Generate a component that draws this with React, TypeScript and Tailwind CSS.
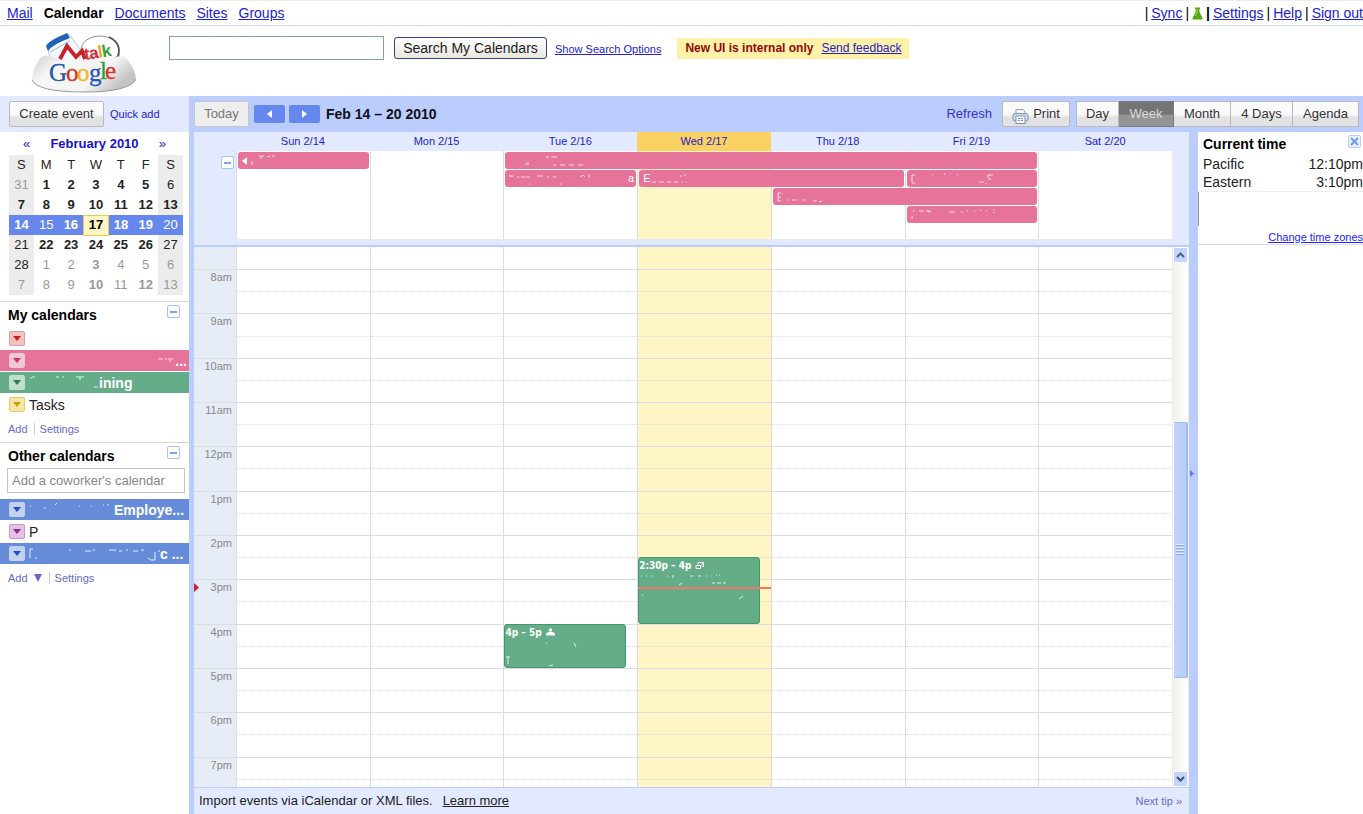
import React from "react";
import clsx from "clsx";

const DAYS = ["Sun 2/14", "Mon 2/15", "Tue 2/16", "Wed 2/17", "Thu 2/18", "Fri 2/19", "Sat 2/20"];
const HOURS = ["8am", "9am", "10am", "11am", "12pm", "1pm", "2pm", "3pm", "4pm", "5pm", "6pm", "7pm"];
const TODAY = 3;
const FIRST_HOUR = 8;

const topOf = (hour: number) => `${((hour - FIRST_HOUR) / HOURS.length) * 100}%`;
const heightOf = (hours: number) => `${(hours / HOURS.length) * 100}%`;

function Specks({ d, className }: { d: string; className?: string }) {
  return (
    <svg className={clsx("shrink-0", className)} width="100" height="16" viewBox="0 0 100 16" aria-hidden="true">
      <path d={d} fill="none" stroke="#fff" strokeOpacity="0.75" strokeWidth="1" />
    </svg>
  );
}

function Logo() {
  return (
    <svg width="110" height="64" viewBox="0 0 110 64" role="img" aria-label="Google talk bowl">
      <defs>
        <linearGradient id="bowl" x1="0" x2="1" y1="0" y2="0.4">
          <stop offset="0" stopColor="#cfcfcf" />
          <stop offset="0.3" stopColor="#f6f6f6" />
          <stop offset="0.75" stopColor="#f4f4f4" />
          <stop offset="1" stopColor="#c4c4c4" />
        </linearGradient>
      </defs>
      <ellipse cx="71" cy="18" rx="19" ry="14" fill="#fff" stroke="#8a8a8a" strokeWidth="1" />
      <path d="M80 5q13 6 9 20" fill="none" stroke="#555" strokeWidth="1.800" />
      <path d="M18 14 40 2l11 15v12H22z" fill="#f4f8fc" stroke="#a9bbcb" strokeWidth="0.800" />
      <path d="M17 14Q19 9 38 1l3 5Q24 12 19 19z" fill="#2463b4" />
      <path d="M21 20 41 9" fill="none" stroke="#9db9dc" strokeWidth="1" />
      <path d="M12 25Q16 22 24 25 56 29 88 25 94 22 97 26 107 38 107 48 100 60 56 60 8 60 3 48 3 37 12 25z" fill="url(#bowl)" />
      <path d="M3 48Q8 60 56 60 100 60 107 47" fill="none" stroke="#979b9e" strokeWidth="1" />
      <path d="M31 27 38 14l9 11 6-6 3 8" fill="none" stroke="#c5222a" strokeWidth="3.800" />
      <g fontFamily="Liberation Sans, sans-serif" fontSize="17" fontWeight="bold" transform="rotate(-9 56 28)">
        <text x="56" y="28" fill="#d6342f">t</text>
        <text x="61" y="28" fill="#d6283f">a</text>
        <text x="70" y="28" fill="#f0a51c">l</text>
        <text x="74" y="28" fill="#3a9e2f">k</text>
      </g>
      <g fontFamily="Liberation Serif, serif" fontSize="25" strokeWidth="0.300">
        <text x="20" y="49" fill="#2657a8" stroke="#2657a8">G</text>
        <text x="37" y="49" fill="#d8332b" stroke="#d8332b">o</text>
        <text x="48" y="49" fill="#efb81b" stroke="#efb81b">o</text>
        <text x="60" y="49" fill="#2657c0" stroke="#2657c0">g</text>
        <text x="71" y="47" fill="#2f9e3b" stroke="#2f9e3b">l</text>
        <text x="76" y="47" fill="#d8332b" stroke="#d8332b">e</text>
      </g>
    </svg>
  );
}

function Flask() {
  return (
    <svg width="11" height="13" viewBox="0 0 11 13" aria-hidden="true">
      <path d="M3 0.500h5v1.500H7.500v3l3 6q0.500 1.500-1 1.500h-8q-1.500 0-1-1.500l3-6V2H3z" fill="#55a80f" />
      <path d="M5 2v3.500L3 9" fill="none" stroke="#a6dc6c" strokeWidth="1" />
    </svg>
  );
}

function PrintIcon() {
  return (
    <svg width="17" height="16" viewBox="0 0 17 16" fill="none" aria-hidden="true">
      <path d="M4 6V1.500h7L13 4v2" fill="#fff" stroke="#8f9fb2" />
      <rect x="1" y="5.500" width="15" height="7.500" rx="2" fill="#d5dfe9" stroke="#7d93ab" />
      <rect x="4" y="8" width="9" height="7.500" fill="#fff" stroke="#7d93ab" />
      <path d="M6 10.500h5M6 12.500h5" stroke="#5e95da" strokeDasharray="2 1" />
    </svg>
  );
}

function Minus({ label }: { label: string }) {
  return (
    <button aria-label={label} className="flex size-[13px] shrink-0 items-center justify-center rounded-[2px] border border-[#a9c0fa] bg-white">
      <span className="h-[2px] w-[7px] bg-[#7ea2ec]" />
    </button>
  );
}

const BTN = "border border-[#b9b9b9] bg-linear-to-b from-[#fafafa] from-50% to-[#e2e2e2] to-65% text-[#333]";

function TopBar() {
  return (
    <nav className="flex h-[26px] shrink-0 items-center justify-between border-t border-b border-t-[#eee] border-b-[#c9dbef] pl-[7px] text-sm whitespace-nowrap">
      <div className="flex gap-[11px] text-[#22c]">
        <a href="#mail" className="underline">Mail</a>
        <b className="text-black">Calendar</b>
        <a href="#documents" className="underline">Documents</a>
        <a href="#sites" className="underline">Sites</a>
        <a href="#groups" className="underline">Groups</a>
      </div>
      <div className="flex items-center gap-[3px] text-[#22c]">
        <span className="text-black">|</span>
        <a href="#sync" className="underline">Sync</a>
        <span className="text-black">|</span>
        <Flask />
        <b className="text-black">|</b>
        <a href="#settings" className="underline">Settings</a>
        <span className="text-black">|</span>
        <a href="#help" className="underline">Help</a>
        <span className="text-black">|</span>
        <a href="#signout" className="underline">Sign out</a>
      </div>
    </nav>
  );
}

function SearchHeader() {
  return (
    <header className="flex h-[70px] shrink-0 items-start whitespace-nowrap">
      <div className="w-[169px] shrink-0 pt-[6px] pl-[29px]">
        <Logo />
      </div>
      <form className="flex items-center pt-[10px]" onSubmit={(e) => e.preventDefault()}>
        <input aria-label="Search calendars" className="h-6 w-[215px] border border-[#7f9db9] bg-white px-1 text-sm outline-none" />
        <button className="ml-[10px] h-[22px] w-[153px] rounded-[3px] border border-[#35427d] bg-linear-to-b from-white to-[#e8e7e0] text-sm text-[#222]">
          Search My Calendars
        </button>
        <a href="#options" className="ml-2 pt-[3px] text-[11px] text-[#22c] underline">Show Search Options</a>
        <div className="ml-4 flex h-[21px] items-center gap-2 bg-[#fff1a8] px-2 text-xs">
          <b className="text-[#8f0808]">New UI is internal only</b>
          <a href="#feedback" className="text-[#22c] underline">Send feedback</a>
        </div>
      </form>
    </header>
  );
}

/* A trailing "b" marks a day that has events, "o" a day outside the month. */
const WEEKS = [
  ["31o", "1b", "2b", "3b", "4b", "5b", "6"],
  ["7b", "8b", "9b", "10b", "11b", "12b", "13b"],
  ["14b", "15", "16b", "17b", "18b", "19b", "20"],
  ["21", "22b", "23b", "24b", "25b", "26b", "27"],
  ["28", "1o", "2o", "3bo", "4o", "5o", "6o"],
  ["7o", "8o", "9o", "10bo", "11o", "12bo", "13o"],
];

function MiniCalendar() {
  return (
    <section className="px-[6px] pb-[6px]">
      <div className="flex h-[23px] items-center justify-between px-[17px] text-[#22c]">
        <button aria-label="Previous month" className="text-[13px]">«</button>
        <b className="text-[13px] text-[#1a10c8]">February 2010</b>
        <button aria-label="Next month" className="text-[13px]">»</button>
      </div>
      <table className="ml-[3px] w-[174px] table-fixed border-collapse text-center text-[13px] leading-4 text-[#222]">
        <thead>
          <tr className="h-5">
            {["S", "M", "T", "W", "T", "F", "S"].map((d, i) => (
              <th key={i} className={clsx("p-0 font-normal", i % 6 === 0 && "bg-[#ececec]")}>{d}</th>
            ))}
          </tr>
        </thead>
        <tbody>
          {WEEKS.map((week, w) => (
            <tr key={w} className="h-5">
              {week.map((day, i) => (
                <td
                  key={i}
                  className={clsx(
                    "p-0",
                    day.includes("b") && "font-bold",
                    day.includes("o") && "text-[#999]",
                    w === 2 && i !== TODAY && "bg-[#6688ee] text-white",
                    w === 2 && i === TODAY && "border border-[#f3c74f] bg-[#fff5c5] text-black",
                    w !== 2 && i % 6 === 0 && "bg-[#ececec]",
                  )}
                >
                  {parseInt(day, 10)}
                </td>
              ))}
            </tr>
          ))}
        </tbody>
      </table>
    </section>
  );
}

function Chip({ className, label }: { className: string; label: string }) {
  return (
    <button aria-label={label} className={clsx("flex h-[15px] w-4 shrink-0 items-center justify-center rounded-[2px] border", className)}>
      <svg width="8" height="5" viewBox="0 0 8 5" aria-hidden="true">
        <path d="M0 0h8L4 5z" fill="currentColor" />
      </svg>
    </button>
  );
}

const ROW = "flex h-[21px] items-center gap-1 overflow-hidden pl-[9px] text-sm whitespace-nowrap";
const SECTION_HEAD = "flex items-start justify-between pr-[9px] pl-2";

function Sidebar() {
  return (
    <aside className="flex w-[189px] shrink-0 flex-col bg-white">
      <div className="flex h-9 shrink-0 items-center gap-[6px] bg-[#e3e9ff] pl-[9px]">
        <button className={clsx(BTN, "h-[26px] w-[95px] rounded-[2px] text-[13px]")}>Create event</button>
        <a href="#quick" className="text-[11px] text-[#22c]">Quick add</a>
      </div>
      <MiniCalendar />

      <section className="border-t border-[#d8d8d8]">
        <div className={clsx(SECTION_HEAD, "h-[26px] pt-[3px]")}>
          <h2 className="text-sm font-bold text-black">My calendars</h2>
          <Minus label="Collapse my calendars" />
        </div>
        <div className="flex flex-col gap-px">
          <div className={ROW}>
            <Chip label="Calendar options" className="border-[#e79a9a] bg-[#f1c3c3] text-[#c5221f]" />
          </div>
          <div className={clsx(ROW, "justify-between bg-[#e67399] pr-[2px] font-bold text-white")}>
            <Chip label="Calendar options" className="border-[#f3c3d2] bg-[#f5c7d6] text-[#cf3468]" />
            <span className="flex items-center">
              <Specks d="M83 6h5M90 6h2M93 6h5M95 7v2" />
              ...
            </span>
          </div>
          <div className={clsx(ROW, "bg-[#65ad89] font-bold text-white")}>
            <Chip label="Calendar options" className="border-[#c1dfcf] bg-[#c1dfcf] text-[#2f7d55]" />
            <span className="flex items-center">
              <svg width="70" height="16" viewBox="0 0 70 16" aria-hidden="true">
                <path d="M1 4l2-2h3M27 2h3M33 2h2M47 2h8M51 2v3M69 12h-4" fill="none" stroke="#fff" strokeOpacity="0.8" />
              </svg>
              ining
            </span>
          </div>
          <div className={clsx(ROW, "text-[#222]")}>
            <Chip label="Calendar options" className="border-[#e8cd6b] bg-[#f5e6a8] text-[#c9a100]" />
            Tasks
          </div>
        </div>
        <div className="flex h-[27px] items-center pl-2 text-[11px] leading-3 text-[#6a6ac8]">
          <a href="#add" className="mr-[5px] border-r border-[#ccc] pr-[6px]">Add</a>
          <a href="#calsettings">Settings</a>
        </div>
      </section>

      <section className="border-t border-[#d8d8d8]">
        <div className={clsx(SECTION_HEAD, "h-[25px] pt-[3px]")}>
          <h2 className="text-sm font-bold text-black">Other calendars</h2>
          <Minus label="Collapse other calendars" />
        </div>
        <input
          aria-label="Add a coworker's calendar"
          placeholder="Add a coworker's calendar"
          className="mb-[6px] ml-[7px] block h-[25px] w-[178px] border border-[#c4c4c4] px-1 text-[13px] outline-none placeholder:text-[#888]"
        />
        <div className="flex flex-col gap-px">
          <div className={clsx(ROW, "bg-[#668cd9] font-bold text-white")}>
            <Chip label="Calendar options" className="border-[#c2d1f0] bg-[#c2d1f0] text-[#1f4fc0]" />
            <span className="flex items-center">
              <svg width="85" height="16" viewBox="0 0 85 16" aria-hidden="true">
                <path d="M1 4h1M15 6h2M26 3l2-2M50 4h1M62 4h1M74 3h1M79 2v2" fill="none" stroke="#fff" strokeOpacity="0.8" />
              </svg>
              Employe...
            </span>
          </div>
          <div className={clsx(ROW, "text-[#222]")}>
            <Chip label="Calendar options" className="border-[#c994c9] bg-[#e2c3e2] text-[#8a2b93]" />
            P
          </div>
          <div className={clsx(ROW, "bg-[#668cd9] font-bold text-white")}>
            <Chip label="Calendar options" className="border-[#c2d1f0] bg-[#c2d1f0] text-[#1f4fc0]" />
            <span className="flex items-center">
              <svg width="131" height="16" viewBox="0 0 131 16" aria-hidden="true">
                <path d="M1 3v9M1 3h3M6 12h2M40 4h2M56 5h6M65 3v2M80 4h7M90 5h3M97 4h2M104 5h5M112 4h3M119 12l3 2h4V6M129 5h2" fill="none" stroke="#fff" strokeOpacity="0.85" />
              </svg>
              c ...
            </span>
          </div>
        </div>
        <div className="flex h-[27px] items-center pl-2 text-[11px] leading-3 text-[#6a6ac8]">
          <a href="#addother" className="mr-[5px] flex items-center gap-[6px] border-r border-[#ccc] pr-[7px]">
            Add
            <svg width="8" height="8" viewBox="0 0 8 8" aria-hidden="true">
              <path d="M0 0h8L4 8z" fill="currentColor" />
            </svg>
          </a>
          <a href="#othersettings">Settings</a>
        </div>
      </section>
    </aside>
  );
}

function Toolbar() {
  const views = [
    { name: "Day", w: "w-[43px]" },
    { name: "Week", w: "w-[55px]" },
    { name: "Month", w: "w-[57px]" },
    { name: "4 Days", w: "w-[62px]" },
    { name: "Agenda", w: "w-[66px]" },
  ];
  return (
    <div className="flex h-9 shrink-0 items-center pr-1 text-[13px] whitespace-nowrap">
      <button className="h-[26px] w-[55px] rounded-[2px] border border-[#c6c6c6] bg-[#eee] text-[#777]">Today</button>
      <button aria-label="Previous week" className="ml-[5px] flex h-[18px] w-[31px] items-center justify-center rounded-[2px] bg-[#6688ee]">
        <svg width="5" height="8" viewBox="0 0 5 8" aria-hidden="true"><path d="M5 0v8L0 4z" fill="#fff" /></svg>
      </button>
      <button aria-label="Next week" className="ml-1 flex h-[18px] w-[31px] items-center justify-center rounded-[2px] bg-[#6688ee]">
        <svg width="5" height="8" viewBox="0 0 5 8" aria-hidden="true"><path d="M0 0v8l5-4z" fill="#fff" /></svg>
      </button>
      <h1 className="ml-[6px] text-sm font-bold text-[#111]">Feb 14 – 20 2010</h1>
      <a href="#refresh" className="mr-[10px] ml-auto text-[#3333cc]">Refresh</a>
      <button className={clsx(BTN, "mr-[6px] flex h-[26px] w-[68px] items-center justify-center gap-1 rounded-[2px]")}>
        <span className="pt-1"><PrintIcon /></span>
        Print
      </button>
      <div className="flex">
        {views.map((v) => (
          <button
            key={v.name}
            className={clsx(
              "h-[26px] border-y border-r text-center",
              v.w,
              v.name === "Day" && "border-l",
              v.name === "Week"
                ? "border-[#7a7a7a] bg-linear-to-b from-[#747474] from-50% to-[#949494] to-55% text-[#ddd]"
                : "border-[#b9b9b9] bg-linear-to-b from-[#fafafa] from-50% to-[#e2e2e2] to-65% text-[#333]",
            )}
          >
            {v.name}
          </button>
        ))}
      </div>
    </div>
  );
}

const COLS = "grid grid-cols-[42px_repeat(7,minmax(0,1fr))_17px]";

const ALL_DAY = [
  { pos: "col-start-2 col-span-1 row-start-1", lead: "", tail: "", d: "M9 8v4M16 3h5M18 4v2M24 4l3-1M29 3h3", back: true },
  { pos: "col-start-4 col-span-4 row-start-1", lead: "", tail: "", d: "M18 11h4M39 4h3M44 4h6M46 12h3M53 12h5M62 12h5M71 12h5M21 9v2" },
  { pos: "col-start-4 col-span-1 row-start-2", lead: "", tail: "a", d: "M2 5h4M5 5v1M10 6h2M14 6h4M19 6h4M30 5h6M40 6h2M46 6h3M73 6l3-2 2 2M82 4v3M22 13h1M53 13h1" },
  { pos: "col-start-5 col-span-2 row-start-2", lead: "E", tail: "", d: "M2 11h4M9 11h5M17 11h4M24 11h4M32 11h1M36 11h1M31 4v2M35 3v2" },
  { pos: "col-start-7 col-span-1 row-start-2", lead: "", tail: "", d: "M3 4v8M3 4h3M3 12h3M23 4h1M35 3h2M41 3h1M48 4h1M70 11h5M79 4h5M79 4v3M79 8h3M77 12v1" },
  { pos: "col-start-6 col-span-2 row-start-3", lead: "", tail: "", d: "M3 4v8M3 4h3M3 8h3M3 12h3M7 5l1-1M13 11h1M17 11h4M23 11h1M27 11h3M38 12h4M44 13l3-1" },
  { pos: "col-start-7 col-span-1 row-start-4", lead: "", tail: "", d: "M3 9v3M4 5l1-2M10 4h5M17 4h5M20 4v2M40 5h6M52 5h2M58 4h1M65 4h1M72 3v1M77 4h1M85 2v1M85 5v1" },
];

function AllDayArea() {
  return (
    <div className="shrink-0 border-b-2 border-[#bbccff] bg-[#e3e9ff] pb-[6px]">
      <div className={clsx(COLS, "h-[19px] items-stretch text-center text-[11px] leading-[19px] text-[#2222cc]")}>
        {DAYS.map((d, i) => (
          <div key={d} className={clsx(i === 0 && "col-start-2", i === TODAY && "bg-[#fad163]")}>{d}</div>
        ))}
      </div>
      <div className={clsx(COLS, "h-[88px] grid-rows-[18px_18px_18px_18px_minmax(0,1fr)]")}>
        {DAYS.map((d, i) => (
          <div
            key={d}
            className={clsx(
              "row-span-5 row-start-1 border-l border-[#ddd]",
              i === TODAY ? "bg-[#fff5c5]" : "bg-white",
              ["col-start-2", "col-start-3", "col-start-4", "col-start-5", "col-start-6", "col-start-7", "col-start-8"][i],
            )}
          />
        ))}
        <div className="col-start-1 row-start-1 flex items-end justify-end pr-[2px]">
          <Minus label="Collapse all-day events" />
        </div>
        {ALL_DAY.map((e) => (
          <div
            key={e.pos}
            className={clsx(
              e.pos,
              "z-10 mr-px ml-[2px] flex h-[17px] items-center self-end overflow-hidden rounded-[3px] bg-[#e67399] px-[2px] text-[11px] text-white",
            )}
          >
            {e.back && (
              <svg width="5" height="8" viewBox="0 0 5 8" className="-mr-1 ml-[2px] shrink-0" aria-hidden="true"><path d="M5 0v8L0 4z" fill="#fff" /></svg>
            )}
            {e.lead && <span className="pl-[2px]">{e.lead}</span>}
            <Specks d={e.d} />
            {e.tail && <span className="ml-auto">{e.tail}</span>}
          </div>
        ))}
      </div>
    </div>
  );
}

function TimedEvent({ start, hours, title, icon, d }: { start: number; hours: number; title: string; icon: React.ReactNode; d: string }) {
  return (
    <div
      className="absolute right-[11px] left-0 overflow-hidden rounded-[3px] border border-[#3f9a6b] bg-[#65ad89] text-white"
      style={{ top: topOf(start), height: heightOf(hours) }}
    >
      <div className="flex items-center gap-1 font-['DejaVu_Sans_Condensed','DejaVu_Sans',sans-serif] text-[10px] leading-[15px] font-bold">
        {title}
        {icon}
      </div>
      <svg width="118" height="34" viewBox="0 0 118 34" aria-hidden="true">
        <path d={d} fill="none" stroke="#fff" strokeOpacity="0.8" />
      </svg>
    </div>
  );
}

const repeatIcon = (
  <svg width="10" height="9" viewBox="0 0 10 9" fill="none" stroke="#fff" aria-hidden="true">
    <path d="M3 3.500V1.500h5.500v4H7M1 4.500h4.500v3H1zM5 5.500 8 2" />
  </svg>
);

const guestIcon = (
  <svg width="9" height="8" viewBox="0 0 9 8" fill="#fff" aria-hidden="true">
    <circle cx="4.500" cy="2" r="1.700" />
    <path d="M0 7.500V5.500L2.500 4h4L9 5.500v2z" />
  </svg>
);

function ScrollBar() {
  return (
    <div className="flex w-[17px] shrink-0 flex-col border-x border-[#eeede5] bg-linear-to-r from-[#f0f0ec] to-white">
      <button aria-label="Scroll up" className="flex h-4 shrink-0 items-center justify-center rounded-[2px] border border-white bg-[#c3d5fd]">
        <svg width="9" height="6" viewBox="0 0 9 6" aria-hidden="true"><path d="M1 5l3.500-3.500L8 5" fill="none" stroke="#4d6185" strokeWidth="2" /></svg>
      </button>
      <div className="flex-[160]" />
      <div className="flex flex-[255] flex-col items-center justify-center gap-px rounded-[2px] border border-r-2 border-[#a3b9e8] border-l-white bg-linear-to-r from-[#bfd3fc] to-[#b9cdfb]">
        {[0, 1, 2, 3].map((n) => (
          <span key={n} className="h-[2px] w-2 border-b border-[#8cabec] bg-[#e5eeff]" />
        ))}
      </div>
      <div className="flex-[94]" />
      <button aria-label="Scroll down" className="flex h-4 shrink-0 items-center justify-center rounded-[2px] border border-white bg-[#c3d5fd]">
        <svg width="9" height="6" viewBox="0 0 9 6" aria-hidden="true"><path d="M1 1l3.500 3.500L8 1" fill="none" stroke="#3d5178" strokeWidth="2" /></svg>
      </button>
    </div>
  );
}

function TimeGrid() {
  const now = 15 + 1 / 6;
  return (
    <div className="flex min-h-0 flex-1 overflow-hidden bg-white">
      <div className="flex min-w-0 flex-1 flex-col">
        <div className="grid h-[22px] shrink-0 grid-cols-[42px_repeat(7,minmax(0,1fr))]">
          <div className="bg-[#e6edf7]" />
          {DAYS.map((d, i) => (
            <div key={d} className={clsx("border-l border-[#ddd]", i === TODAY && "bg-[#fff5c5]")} />
          ))}
        </div>
        <div className="grid h-[532px] shrink-0 grid-cols-[42px_repeat(7,minmax(0,1fr))]">
          <div className="relative flex flex-col bg-[#e6edf7]">
            {HOURS.map((h) => (
              <div key={h} className="flex-1 border-t border-[#ddd] pr-1 text-right text-[11px] leading-[15px] text-[#888]">{h}</div>
            ))}
            <svg className="absolute left-0 -mt-1" style={{ top: topOf(now) }} width="5" height="9" viewBox="0 0 5 9" aria-hidden="true">
              <path d="M0 0v9l5-4.500z" fill="#d0202c" />
            </svg>
          </div>
          {DAYS.map((d, i) => (
            <div key={d} className={clsx("relative flex flex-col border-l border-[#ddd]", i === TODAY && "bg-[#fff5c5]")}>
              {HOURS.map((h) => (
                <div key={h} className="flex flex-1 flex-col border-t border-[#ddd]">
                  <div className="flex-1 border-b border-dotted border-[#ddd]" />
                  <div className="flex-1" />
                </div>
              ))}
              {i === 2 && (
                <TimedEvent start={16} hours={1} title="4p – 5p" icon={guestIcon} d="M41 3h1M69 3l2 4M1 17h4M3 17v7M44 26l4-1" />
              )}
              {i === TODAY && (
                <>
                  <TimedEvent start={14.5} hours={1.5} title="2:30p – 4p" icon={repeatIcon} d="M2 3h1M7 3h1M12 3h1M28 3h1M34 2v3M51 3h3M59 3h3M67 3h1M77 2h1M80 2h1M40 12l3-2M73 10h3M78 10h4M84 10h3M3 22h1M100 26l4-3" />
                  <div className="absolute inset-x-0 h-[2px] bg-[#f5776b]" style={{ top: topOf(now) }} />
                </>
              )}
            </div>
          ))}
        </div>
      </div>
      <ScrollBar />
    </div>
  );
}

function TimePanel() {
  return (
    <aside className="min-h-0 flex-1 bg-white text-sm whitespace-nowrap text-[#222]">
      <div className="border-b border-[#ddd] pl-[5px]">
        <div className="flex h-[23px] items-center justify-between pr-[2px]">
          <h2 className="font-bold text-black">Current time</h2>
          <button aria-label="Close" className="mb-1 flex size-[13px] items-center justify-center rounded-[2px] border border-[#b5cdf9] bg-[#eaf1ff]">
            <svg width="9" height="9" viewBox="0 0 9 9" aria-hidden="true"><path d="M1 1l7 7M8 1 1 8" stroke="#6f9ae8" strokeWidth="2" /></svg>
          </button>
        </div>
        <div className="flex justify-between leading-[18px]"><span>Pacific</span><span>12:10pm</span></div>
        <div className="flex justify-between leading-[18px]"><span>Eastern</span><span>3:10pm</span></div>
        <div className="-ml-[5px] flex h-[53px] items-start justify-between border-t border-[#eee]">
          <span className="h-[34px] w-px bg-[#999]" />
          <a href="#zones" className="self-end text-[11px] leading-[14px] text-[#22f] underline">Change time zones</a>
        </div>
      </div>
    </aside>
  );
}

export default function App() {
  return (
    <div className="flex h-screen flex-col overflow-hidden bg-white font-['Liberation_Sans',Arial,sans-serif]">
      <TopBar />
      <SearchHeader />
      <div className="flex min-h-0 flex-1">
        <Sidebar />
        <div className="flex min-w-0 flex-1 flex-col bg-[#bbccff] pl-[5px]">
          <Toolbar />
          <div className="flex min-h-0 flex-1">
            <main className="flex min-w-0 flex-1 flex-col">
              <AllDayArea />
              <TimeGrid />
              <footer className="flex h-[27px] shrink-0 items-center border-t border-[#bbccff] bg-[#e3e9ff] pr-[7px] pl-[5px] text-[13px] text-[#222]">
                Import events via iCalendar or XML files.
                <a href="#learn" className="ml-[10px] underline">Learn more</a>
                <a href="#tip" className="ml-auto text-[11px] text-[#6a6ac8]">Next tip »</a>
              </footer>
            </main>
            <button aria-label="Toggle side panel" className="flex w-[9px] shrink-0 items-center">
              <svg width="4" height="7" viewBox="0 0 4 7" className="ml-px" aria-hidden="true"><path d="M0 0v7l4-3.500z" fill="#5b7cf0" /></svg>
            </button>
            <div className="flex w-[165px] shrink-0">
              <TimePanel />
            </div>
          </div>
        </div>
      </div>
    </div>
  );
}
